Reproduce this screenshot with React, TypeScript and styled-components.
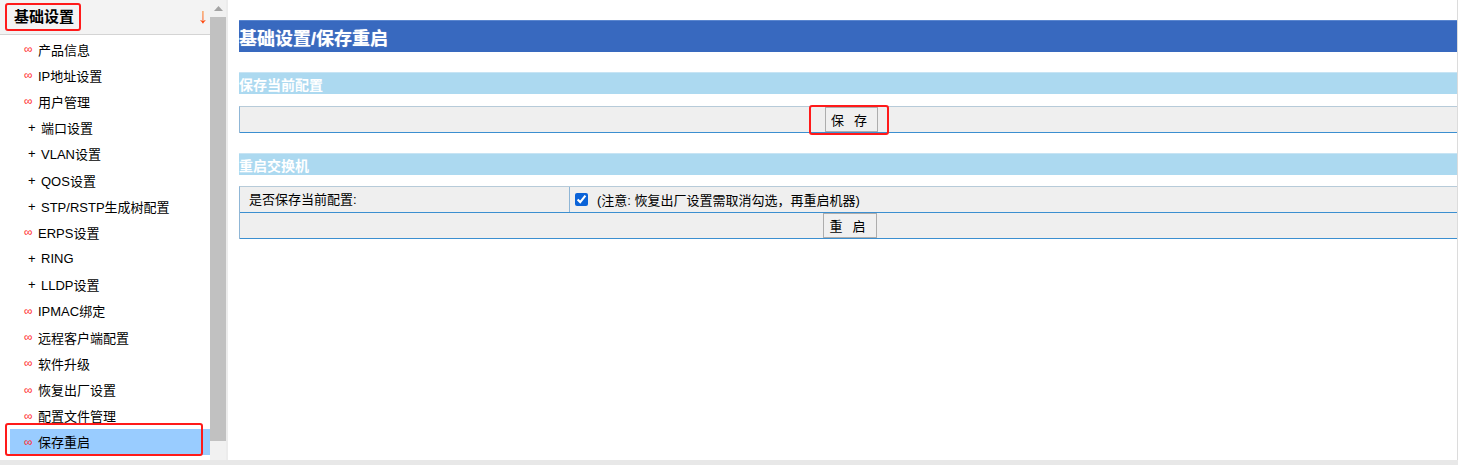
import {createGlobalStyle, styled} from 'styled-components';

const GlobalStyle = createGlobalStyle`
    html, body {
        margin: 0;
        padding: 0;
        background: #fff;
    }
    body {
        font-family: "Liberation Sans", Arial, "Noto Sans CJK SC", sans-serif;
        font-size: 13px;
        color: #000;
    }
`;

const Page = styled.div`
    width: 1458px;
    height: 465px;
    display: flex;
    flex-direction: column;
    overflow: hidden;
`;

const Frames = styled.div`
    display: flex;
    height: 460px;
`;

const BottomStrip = styled.div`
    height: 5px;
    background: #e8e8e8;
`;

const SideFrame = styled.div`
    width: 226px;
    display: flex;
    border-right: 2px solid #ececec;
`;

const Menu = styled.div`
    width: 210px;
    display: flex;
    flex-direction: column;
    background: #fff;
`;

const MenuHeader = styled.div`
    height: 34px;
    display: flex;
    align-items: center;
    justify-content: space-between;
    padding: 0 2px 0 5px;
    background: #f3f3f3;
    border-bottom: 1px solid #d4d4d4;
`;

const Marked = styled.span`
    border: 2px solid #ff1a1a;
    border-radius: 3px;
`;

const HeaderTitle = styled(Marked)`
    font-size: 15px;
    font-weight: bold;
    padding: 2px 5px 2px 7px;
    line-height: 20px;
`;

const Arrow = styled.span`
    font-size: 21px;
    line-height: 21px;
    margin-top: -4px;
    background: linear-gradient(#ff8a00, #ff2a00);
    -webkit-background-clip: text;
    background-clip: text;
    color: transparent;
`;

const MenuList = styled.ul`
    list-style: none;
    margin: 1px 0 0 0;
    padding: 0;
`;

const MenuItem = styled.li<{$active?: boolean}>`
    position: relative;
    height: 26.2px;
    margin-left: 10px;
    display: flex;
    align-items: center;
    background: ${p => (p.$active ? '#99ccff' : 'transparent')};

    ${p =>
        p.$active &&
        `
        &::after {
            content: '';
            position: absolute;
            left: -5px;
            right: 7px;
            top: -6px;
            bottom: -1px;
            border: 2px solid #ff1a1a;
            border-radius: 3px;
        }
    `}
`;

const Marker = styled.span<{$kind: 'loop' | 'plus'}>`
    display: inline-block;
    width: ${p => (p.$kind === 'loop' ? '14px' : '13px')};
    padding-left: ${p => (p.$kind === 'loop' ? '14px' : '18px')};
    box-sizing: content-box;
    color: ${p => (p.$kind === 'loop' ? '#ff2a2a' : '#000')};
    font-size: ${p => (p.$kind === 'loop' ? '12px' : '13px')};
    line-height: 1;
`;

const ScrollBar = styled.div`
    width: 16px;
    display: flex;
    flex-direction: column;
    background: #f1f1f1;
`;

const ScrollArrow = styled.div`
    height: 17px;
    display: flex;
    align-items: center;
    justify-content: center;
`;

const ScrollThumb = styled.div`
    height: 424px;
    background: #c1c1c1;
`;

const Main = styled.div`
    flex: 1;
    padding: 20px 0 0 11px;
    border-right: 1px solid #dcdcdc;
    display: flex;
    flex-direction: column;
`;

const TitleBar = styled.div`
    height: 32px;
    display: flex;
    align-items: center;
    background: #3869bf;
    border-top: 1px solid #5a86cf;
    box-sizing: border-box;
    color: #fff;
    font-size: 18px;
    font-weight: bold;
    text-shadow: 0 0 1px rgba(255, 255, 255, 0.6);
`;

const SectionBar = styled.div<{$top: number}>`
    height: 22px;
    margin-top: ${p => p.$top}px;
    display: flex;
    align-items: center;
    background: #acd9f0;
    border-top: 1px solid #c7e4f4;
    box-sizing: border-box;
    color: #fff;
    font-size: 14px;
    font-weight: bold;
`;

const Box = styled.div<{$top: number}>`
    margin-top: ${p => p.$top}px;
    border-top: 1px solid #b7cbd9;
    border-left: 1px solid #8fb6d6;
    background: #efefef;
`;

const Row = styled.div<{$center?: boolean; $shift?: number}>`
    height: 25px;
    display: flex;
    align-items: center;
    justify-content: ${p => (p.$center ? 'center' : 'flex-start')};
    padding-left: ${p => p.$shift ?? 0}px;
    border-bottom: 1px solid #3b8fd0;
`;

const LabelCell = styled.div`
    width: 330px;
    height: 100%;
    padding: 2px 0 0 9px;
    box-sizing: border-box;
    border-right: 1px solid #8fb6d6;
`;

const ValueCell = styled.div`
    flex: 1;
    display: flex;
    align-items: center;
    padding-left: 4px;
`;

const Check = styled.input`
    width: 13px;
    height: 13px;
    margin: 0 9px 1px 1px;
    accent-color: #0b63d8;
`;

const ButtonMark = styled(Marked)`
    display: inline-flex;
    padding: 0 6px 1px 14px;
    margin-left: 1px;
`;

const PushButton = styled.button`
    height: 25px;
    padding: 0 0 0 5px;
    background: #f0f0f0;
    border: 1px solid #adadad;
    font-family: "Liberation Sans", Arial, "Noto Sans CJK SC", sans-serif;
    font-size: 13px;
    color: #000;
    letter-spacing: 10px;
    margin-right: 3px;
`;

const items: {label: string; kind: 'loop' | 'plus'}[] = [
    {label: '产品信息', kind: 'loop'},
    {label: 'IP地址设置', kind: 'loop'},
    {label: '用户管理', kind: 'loop'},
    {label: '端口设置', kind: 'plus'},
    {label: 'VLAN设置', kind: 'plus'},
    {label: 'QOS设置', kind: 'plus'},
    {label: 'STP/RSTP生成树配置', kind: 'plus'},
    {label: 'ERPS设置', kind: 'loop'},
    {label: 'RING', kind: 'plus'},
    {label: 'LLDP设置', kind: 'plus'},
    {label: 'IPMAC绑定', kind: 'loop'},
    {label: '远程客户端配置', kind: 'loop'},
    {label: '软件升级', kind: 'loop'},
    {label: '恢复出厂设置', kind: 'loop'},
    {label: '配置文件管理', kind: 'loop'},
    {label: '保存重启', kind: 'loop'},
];

const App = () => {
    return (
        <Page>
            <GlobalStyle />
            <Frames>
                <SideFrame>
                    <Menu>
                        <MenuHeader>
                            <HeaderTitle>基础设置</HeaderTitle>
                            <Arrow>↓</Arrow>
                        </MenuHeader>
                        <MenuList>
                            {items.map((item, i) => (
                                <MenuItem key={item.label} $active={i === items.length - 1}>
                                    <Marker $kind={item.kind}>{item.kind === 'loop' ? '∞' : '+'}</Marker>
                                    {item.label}
                                </MenuItem>
                            ))}
                        </MenuList>
                    </Menu>
                    <ScrollBar>
                        <ScrollArrow>
                            <svg width="9" height="5" viewBox="0 0 9 5">
                                <path d="M0 5 L4.5 0 L9 5 Z" fill="#a3a3a3" />
                            </svg>
                        </ScrollArrow>
                        <ScrollThumb />
                    </ScrollBar>
                </SideFrame>
                <Main>
                    <TitleBar>基础设置/保存重启</TitleBar>
                    <SectionBar $top={20}>保存当前配置</SectionBar>
                    <Box $top={12}>
                        <Row $center>
                            <ButtonMark>
                                <PushButton type="button">保存</PushButton>
                            </ButtonMark>
                        </Row>
                    </Box>
                    <SectionBar $top={20}>重启交换机</SectionBar>
                    <Box $top={11}>
                        <Row>
                            <LabelCell>是否保存当前配置:</LabelCell>
                            <ValueCell>
                                <Check type="checkbox" defaultChecked />
                                (注意: 恢复出厂设置需取消勾选，再重启机器)
                            </ValueCell>
                        </Row>
                        <Row $center $shift={6}>
                            <PushButton type="button">重启</PushButton>
                        </Row>
                    </Box>
                </Main>
            </Frames>
            <BottomStrip />
        </Page>
    );
};

export default App;
